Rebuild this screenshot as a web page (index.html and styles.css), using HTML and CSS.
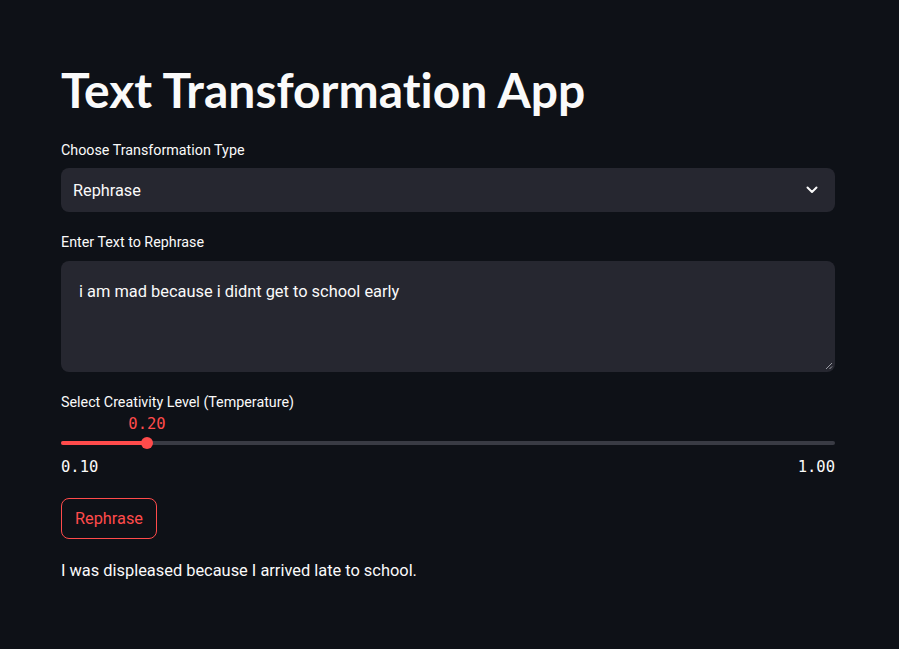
FILE: index.html
```html
<!DOCTYPE html>
<html lang="en">
<head>
<meta charset="utf-8">
<title>Text Transformation App</title>
<link rel="stylesheet" href="styles.css">
</head>
<body>
<main class="main">
  <h1 class="title">Text Transformation App</h1>

  <div class="field field-select">
    <div class="label">Choose Transformation Type</div>
    <div class="select">
      <span class="select-value">Rephrase</span>
      <svg class="chevron" width="12" height="8" viewBox="0 0 12 8"><path d="M1.5 1.5 L6 6 L10.5 1.5" fill="none" stroke="#fafafa" stroke-width="2" stroke-linecap="round" stroke-linejoin="round"/></svg>
    </div>
  </div>

  <div class="field field-text">
    <div class="label">Enter Text to Rephrase</div>
    <div class="textarea">
      <span>i am mad because i didnt get to school early</span>
      <svg class="grip" width="8" height="8" viewBox="0 0 8 8"><path d="M7 1 L1 7 M7 4.5 L4.5 7" stroke="#9a9ba3" stroke-width="1"/></svg>
    </div>
  </div>

  <div class="field field-slider">
    <div class="label">Select Creativity Level (Temperature)</div>
    <div class="slider">
      <div class="value-row"><span class="value" style="left: 11.11%">0.20</span></div>
      <div class="track-wrap">
        <div class="track"></div>
        <div class="fill" style="width: 11.11%"></div>
        <div class="thumb" style="left: 11.11%"></div>
      </div>
      <div class="ticks"><span>0.10</span><span>1.00</span></div>
    </div>
  </div>

  <button class="btn">Rephrase</button>

  <p class="result">I was displeased because I arrived late to school.</p>
</main>
</body>
</html>
```
FILE: styles.css
```css
html, body {
  margin: 0;
  background: #0e1117;
}
body {
  color: #fafafa;
  font-family: Roboto, "Noto Sans", sans-serif;
}
.main {
  width: 774px;
  padding: 61px 0 0 61px;
  display: flex;
  flex-direction: column;
}
.title {
  margin: 0;
  font-family: Lato, Roboto, sans-serif;
  font-weight: 700;
  font-size: 48px;
  line-height: 57.6px;
  font-variant-ligatures: none;
}
.label {
  font-size: 14.3px;
  line-height: 20px;
  color: #fafafa;
}
.field-select { margin-top: 21px; }
.field-select .label { margin-bottom: 8px; }
.select {
  height: 44px;
  background: #262730;
  border-radius: 8px;
  display: flex;
  align-items: center;
  justify-content: space-between;
  padding: 1px 17px 0 12px;
  box-sizing: border-box;
  font-size: 16.3px;
}
.field-text { margin-top: 20px; }
.field-text .label { margin-bottom: 9px; }
.textarea {
  position: relative;
  height: 111px;
  background: #262730;
  border-radius: 8px;
  box-sizing: border-box;
  padding: 18px 18px 16px;
  font-size: 16.4px;
  line-height: 25.6px;
}
.grip {
  position: absolute;
  right: 2px;
  bottom: 2px;
}
.field-slider { margin-top: 20px; }
.slider { display: flex; flex-direction: column; }
.value-row {
  position: relative;
  height: 20px;
}
.value, .ticks {
  font-family: "DejaVu Sans Mono", "Liberation Mono", monospace;
  font-size: 15.5px;
  line-height: 20px;
}
.value {
  position: absolute;
  top: 2px;
  transform: translateX(-50%);
  color: #ff4b4b;
}
.track-wrap {
  position: relative;
  height: 12px;
  margin-top: 5px;
}
.track, .fill {
  position: absolute;
  left: 0;
  top: 4px;
  height: 4px;
  border-radius: 2px;
}
.track { right: 0; background: #393b44; }
.fill { background: #ff4b4b; }
.thumb {
  position: absolute;
  top: 0;
  width: 12px;
  height: 12px;
  margin-left: -6px;
  border-radius: 50%;
  background: #ff4b4b;
}
.ticks {
  margin-top: 8px;
  display: flex;
  justify-content: space-between;
  color: #fafafa;
}
.btn {
  align-self: flex-start;
  margin-top: 21px;
  width: 96px;
  height: 41px;
  border: 1px solid #ff4b4b;
  border-radius: 8px;
  background: #0e1117;
  color: #ff4b4b;
  font-family: Roboto, "Noto Sans", sans-serif;
  font-size: 16.3px;
  padding: 0;
}
.result {
  margin: 20px 0 0;
  font-size: 16.4px;
  line-height: 24px;
}
```
